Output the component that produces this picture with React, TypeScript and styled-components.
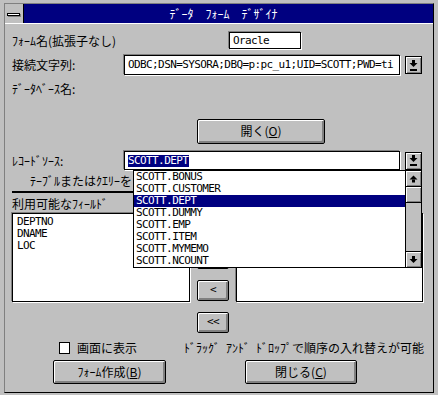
import * as React from 'react';
import styled, { createGlobalStyle } from 'styled-components';

const GRAY = '#c0c0c0';
const NAVY = '#000080';
const SHADOW = '#808080';

const GlobalStyle = createGlobalStyle`
  html, body {
    margin: 0;
    padding: 0;
    background: ${GRAY};
  }
  body {
    font-family: "Noto Sans CJK JP", sans-serif;
    font-size: 12px;
    color: #000;
  }
`;

const sourceItems = [
  'SCOTT.BONUS',
  'SCOTT.CUSTOMER',
  'SCOTT.DEPT',
  'SCOTT.DUMMY',
  'SCOTT.EMP',
  'SCOTT.ITEM',
  'SCOTT.MYMEMO',
  'SCOTT.NCOUNT',
];

const fields = ['DEPTNO', 'DNAME', 'LOC'];

const DownArrow = ({ bar }: { bar?: boolean }) => (
  <svg width="9" height={bar ? 11 : 8} viewBox={`0 0 9 ${bar ? 11 : 8}`}>
    <rect x="3" y="0" width="3" height="3" fill="#000" />
    <polygon points="0.5,3 8.5,3 4.5,7" fill="#000" />
    {bar && <rect x="1" y="9" width="7" height="2" fill="#000" />}
  </svg>
);

const UpArrow = () => (
  <svg width="9" height="8" viewBox="0 0 9 8">
    <polygon points="4.5,0.5 8.5,4.5 0.5,4.5" fill="#000" />
    <rect x="3" y="4.5" width="3" height="3" fill="#000" />
  </svg>
);

class App extends React.Component {
  public render() {
    return (
      <>
        <GlobalStyle />
        <Frame>
          <TitleBar>
            <SysMenu>
              <SysBar />
            </SysMenu>
            <Caption>ﾃﾞｰﾀ　ﾌｫｰﾑ　ﾃﾞｻﾞｲﾅ</Caption>
          </TitleBar>
          <Client>
            <Row top={8} height={17}>
              <Label width={217}>ﾌｫｰﾑ名(拡張子なし)</Label>
              <Edit width={72} height={17}>
                <Mono>Oracle</Mono>
              </Edit>
            </Row>

            <Row top={6} height={20}>
              <Label width={112}>接続文字列:</Label>
              <Edit width={276} height={20}>
                <Mono>ODBC;DSN=SYSORA;DBQ=p:pc_u1;UID=SCOTT;PWD=ti</Mono>
              </Edit>
              <DropButton>
                <DownArrow bar />
              </DropButton>
            </Row>

            <Row top={8} height={12}>
              <Label>ﾃﾞｰﾀﾍﾞｰｽ名:</Label>
            </Row>

            <Row top={24} height={25}>
              <PushButton width={128} height={25} left={185}>
                開く(<Key>O</Key>)
              </PushButton>
            </Row>

            <Row top={7} height={19}>
              <Label width={112}>ﾚｺｰﾄﾞｿｰｽ:</Label>
              <Edit width={276} height={19}>
                <Selection>SCOTT.DEPT</Selection>
              </Edit>
              <DropButton>
                <DownArrow bar />
              </DropButton>
            </Row>

            <GroupCaption>ﾃｰﾌﾞﾙまたはｸｴﾘｰを</GroupCaption>
            <Rule />

            <Row top={5} height={12}>
              <Label>利用可能なﾌｨｰﾙﾄﾞ</Label>
            </Row>

            <ListsRow>
              <ListBox width={178}>
                {fields.map(f => (
                  <ListItem key={f}>{f}</ListItem>
                ))}
              </ListBox>
              <MoverColumn>
                {['>', '>>', '<', '<<'].map(m => (
                  <PushButton key={m} width={32} height={21}>
                    <Mono>{m}</Mono>
                  </PushButton>
                ))}
              </MoverColumn>
              <ListBox width={187} />
            </ListsRow>

            <Row top={9} height={12}>
              <CheckBox />
              <Label>画面に表示</Label>
              <Hint>ﾄﾞﾗｯｸﾞ&#8194;ｱﾝﾄﾞ&#8194;ﾄﾞﾛｯﾌﾟで順序の入れ替えが可能</Hint>
            </Row>

            <Row top={6} height={24}>
              <PushButton width={113} height={24} left={41}>
                ﾌｫｰﾑ作成(<Key>B</Key>)
              </PushButton>
              <PushButton width={112} height={24} left={79}>
                閉じる(<Key>C</Key>)
              </PushButton>
            </Row>

            <DropList>
              <DropItems>
                {sourceItems.map(item => (
                  <DropItem key={item} selected={item === 'SCOTT.DEPT'}>
                    {item}
                  </DropItem>
                ))}
              </DropItems>
              <ScrollBar>
                <ScrollButton edge="bottom">
                  <UpArrow />
                </ScrollButton>
                <Thumb />
                <Track />
                <ScrollButton edge="top">
                  <DownArrow />
                </ScrollButton>
              </ScrollBar>
            </DropList>
          </Client>
        </Frame>
      </>
    );
  }
}

const Frame = styled.div`
  width: 430px;
  height: 390px;
  box-sizing: border-box;
  margin: 3px 0 0 4px;
  border: 1px solid #000;
  border-top-color: ${SHADOW};
  border-left-color: ${SHADOW};
  display: flex;
  flex-direction: column;
`;

const TitleBar = styled.div`
  display: flex;
  height: 20px;
  box-sizing: border-box;
  border-bottom: 1px solid #fff;
`;

const SysMenu = styled.div`
  width: 19px;
  box-sizing: border-box;
  border-right: 1px solid #000;
  background: ${GRAY};
  display: flex;
  align-items: center;
  justify-content: center;
`;

const SysBar = styled.div`
  width: 13px;
  height: 3px;
  box-sizing: border-box;
  background: #fff;
  border: 1px solid #000;
  box-shadow: 1px 1px 0 ${SHADOW};
  margin: 1px 1px 0 0;
`;

const Caption = styled.div`
  flex: 1;
  background: ${NAVY};
  color: #fff;
  line-height: 19px;
  text-align: center;
  padding-right: 10px;
  white-space: nowrap;
`;

const Client = styled.div`
  position: relative;
  flex: 1;
  display: flex;
  flex-direction: column;
  padding: 0 9px 0 7px;
`;

const Row = styled.div<{ top: number; height: number }>`
  display: flex;
  align-items: center;
  margin-top: ${p => p.top}px;
  height: ${p => p.height}px;
`;

const Label = styled.div<{ width?: number }>`
  ${p => (p.width ? `width: ${p.width}px;` : '')}
  flex-shrink: 0;
  line-height: 12px;
  white-space: nowrap;
`;

const Mono = styled.span`
  font-family: "DejaVu Sans Mono", "Liberation Mono", monospace;
  font-size: 11px;
  letter-spacing: -0.6px;
  line-height: 12px;
`;

const Edit = styled.div<{ width: number; height: number }>`
  width: ${p => p.width}px;
  height: ${p => p.height}px;
  box-sizing: border-box;
  flex-shrink: 0;
  background: #fff;
  border: 1px solid #000;
  box-shadow: -1px -1px 0 ${SHADOW}, 1px 1px 0 #fff;
  display: flex;
  align-items: center;
  padding-left: 3px;
  overflow: hidden;
  white-space: nowrap;
`;

const Selection = styled(Mono)`
  display: inline-block;
  background: ${NAVY};
  color: #fff;
  height: 12px;
  padding-right: 1px;
`;

const DropButton = styled.div`
  width: 17px;
  height: 18px;
  box-sizing: border-box;
  margin-left: 5px;
  border: 1px solid #000;
  background: ${GRAY};
  box-shadow: inset 1px 1px 0 #fff, inset -1px -1px 0 ${SHADOW};
  display: flex;
  align-items: center;
  justify-content: center;
`;

const PushButton = styled.div<{ width: number; height: number; left?: number }>`
  width: ${p => p.width}px;
  height: ${p => p.height}px;
  margin-left: ${p => p.left || 0}px;
  box-sizing: border-box;
  flex-shrink: 0;
  border: 1px solid #000;
  border-radius: 2px;
  background: ${GRAY};
  box-shadow: inset 1px 1px 0 #fff, inset -2px -2px 0 ${SHADOW};
  display: flex;
  align-items: center;
  justify-content: center;
  padding-bottom: 1px;
  line-height: 12px;
  white-space: nowrap;
`;

const Key = styled.span`
  text-decoration: underline;
  text-underline-offset: 1px;
`;

const GroupCaption = styled.div`
  margin-top: 5px;
  padding-left: 18px;
  line-height: 12px;
  height: 12px;
  white-space: nowrap;
`;

const Rule = styled.div`
  margin-top: 4px;
  width: 390px;
  height: 2px;
  background: #000;
`;

const ListsRow = styled.div`
  display: flex;
  align-items: flex-start;
  gap: 7px;
  margin-top: 3px;
  height: 120px;
`;

const ListBox = styled.div<{ width: number }>`
  width: ${p => p.width}px;
  height: 89px;
  box-sizing: border-box;
  background: #fff;
  border: 1px solid #000;
  box-shadow: -1px -1px 0 ${SHADOW}, 1px 1px 0 #fff;
  padding: 2px 4px;
`;

const ListItem = styled(Mono)`
  display: block;
  height: 12px;
`;

const MoverColumn = styled.div`
  display: flex;
  flex-direction: column;
  gap: 11px;
  padding-top: 3px;
`;

const CheckBox = styled.div`
  width: 12px;
  height: 12px;
  box-sizing: border-box;
  margin: 0 7px 0 47px;
  background: #fff;
  border: 1px solid #000;
`;

const Hint = styled.div`
  margin-left: 47px;
  line-height: 12px;
  white-space: nowrap;
`;

const DropList = styled.div`
  position: absolute;
  left: 128px;
  top: 146px;
  width: 289px;
  height: 98px;
  box-sizing: border-box;
  border: 1px solid #000;
  background: #fff;
  display: flex;
  z-index: 2;
`;

const DropItems = styled.div`
  flex: 1;
  display: flex;
  flex-direction: column;
`;

const DropItem = styled(Mono)<{ selected?: boolean }>`
  display: block;
  height: 12px;
  padding-left: 2px;
  background: ${p => (p.selected ? NAVY : 'transparent')};
  color: ${p => (p.selected ? '#fff' : '#000')};
  white-space: nowrap;
`;

const ScrollBar = styled.div`
  width: 16px;
  box-sizing: border-box;
  border-left: 1px solid #000;
  background: ${GRAY};
  display: flex;
  flex-direction: column;
`;

const ScrollButton = styled.div<{ edge: 'top' | 'bottom' }>`
  height: 16px;
  box-sizing: border-box;
  border-${p => p.edge}: 1px solid #000;
  box-shadow: inset 1px 1px 0 #fff, inset -1px -1px 0 ${SHADOW};
  display: flex;
  align-items: center;
  justify-content: center;
`;

const Thumb = styled.div`
  height: 16px;
  box-sizing: border-box;
  border-bottom: 1px solid #000;
  box-shadow: inset 1px 1px 0 #fff, inset -1px -1px 0 ${SHADOW};
`;

const Track = styled.div`
  flex: 1;
`;

export default App;
